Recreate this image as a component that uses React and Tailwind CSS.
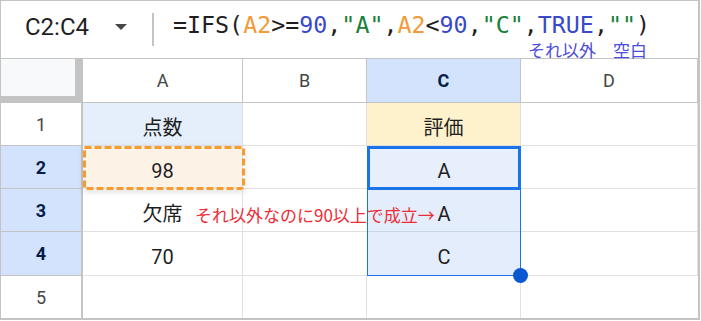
export default function App() {
  const hdr = "flex items-center justify-center border-r border-b border-[#c4c4c4] text-[18px] text-[#444746]";
  const hdrOn = "flex items-center justify-center border-r border-b border-[#c4c4c4] bg-[#d3e3fd] text-[18px] font-bold text-[#041e49]";
  const rowHdr = "flex items-center justify-center border-r-2 border-b border-[#c4c4c4] text-[18px] text-[#444746]";
  const rowHdrOn = "flex items-center justify-center border-r-2 border-b border-[#c4c4c4] bg-[#d3e3fd] text-[18px] font-bold text-[#041e49]";
  const cell = "flex items-center justify-center pt-[7px] border-r border-b border-[#e1e1e1] text-[20px] text-[#1f1f1f]";

  return (
    <div className="w-[701px] h-[321px] bg-white">
      <div className="w-[700px] h-[320px] border-t border-l border-r-2 border-b-2 border-[#c4c4c4] flex flex-col font-['Roboto','Noto_Sans_CJK_JP',sans-serif]">
        {/* formula bar */}
        <div className="h-[58px] shrink-0 border-b border-[#c4c4c4] flex">
          <div className="w-[151px] flex items-center pl-[24px] pb-[6px]">
            <span className="text-[24px] text-[#1f1f1f] leading-none">C2:C4</span>
            <svg className="ml-[26px]" width="12" height="6" viewBox="0 0 12 6">
              <path d="M0 0h12L6 6z" fill="#444746" />
            </svg>
          </div>
          <div className="w-[2px] bg-[#c4c4c4] my-[12px]"></div>
          <div className="flex flex-col pl-[19px] pt-[10px]">
            <div className="font-['DejaVu_Sans_Mono',monospace] text-[23.3px] leading-[27px] whitespace-nowrap text-[#1f1f1f]">
              <span>=IFS(</span>
              <span className="text-[#f29b38]">A2</span>
              <span>&gt;=</span>
              <span className="text-[#3949c8]">90</span>
              <span>,</span>
              <span className="text-[#188038]">"A"</span>
              <span>,</span>
              <span className="text-[#f29b38]">A2</span>
              <span>&lt;</span>
              <span className="text-[#3949c8]">90</span>
              <span>,</span>
              <span className="text-[#188038]">"C"</span>
              <span>,</span>
              <span className="text-[#3949c8]">TRUE</span>
              <span>,</span>
              <span className="text-[#188038]">""</span>
              <span>)</span>
            </div>
            <div className="flex pl-[355px] mt-[3px] text-[17px] leading-[18px] text-[#4b4bdc] font-['Noto_Sans_CJK_JP',sans-serif] whitespace-nowrap">
              <span>それ以外</span>
              <span className="ml-[17px]">空白</span>
            </div>
          </div>
        </div>

        {/* sheet grid */}
        <div className="flex-1 grid grid-cols-[82px_160px_124px_154px_1fr] grid-rows-[44px_43px_43px_43px_44px_1fr]">
          {/* header row */}
          <div className="border-r-[8px] border-b-[7px] border-[#c4c4c4] bg-[#f8f9fa]"></div>
          <div className={hdr}>A</div>
          <div className={hdr}>B</div>
          <div className={hdrOn}>C</div>
          <div className={hdr}>D</div>

          {/* row 1 */}
          <div className={rowHdr}>1</div>
          <div className={cell + " bg-[#e5effc]"}>点数</div>
          <div className={cell}></div>
          <div className={cell + " bg-[#fef2cd]"}>評価</div>
          <div className={cell}></div>

          {/* row 2 */}
          <div className={rowHdrOn}>2</div>
          <div className={cell + " relative bg-[#fdf2e6]"}>
            98
            <svg className="absolute left-0 top-0 shadow-[0_2px_6px_rgba(0,0,0,0.12)]" width="162" height="44">
              <rect x="1.5" y="1.5" width="159" height="41" fill="none" stroke="#f59b2f" strokeWidth="3" strokeDasharray="7 3" />
            </svg>
          </div>
          <div className={cell + " border-r-0"}></div>
          <div className="col-start-4 row-start-3 row-span-3 relative flex flex-col border border-[#1a73e8] text-[20px] text-[#1f1f1f]">
            <div className="h-[42px] relative flex items-center justify-center pt-[6px] bg-[#e7effc]">
              A
              <div className="absolute -inset-px border-[3px] border-[#1a73e8]"></div>
            </div>
            <div className="h-[43px] flex items-center justify-center pt-[7px] bg-[#e3edfb] border-b border-[#c9d5e8]">A</div>
            <div className="flex-1 flex items-center justify-center pt-[7px] bg-[#e3edfb]">C</div>
            <div className="absolute -right-[8px] -bottom-[8px] w-[15px] h-[15px] rounded-full bg-[#0b57d0]"></div>
          </div>
          <div className={cell}></div>

          {/* row 3 */}
          <div className={rowHdrOn}>3</div>
          <div className={cell + " relative"}>
            欠席
            <span className="absolute left-[112px] top-[14px] z-10 whitespace-nowrap text-[17px] leading-[24px] text-[#ec2d37] font-['Noto_Sans_CJK_JP',sans-serif]">
              それ以外なのに90以上で成立→
            </span>
          </div>
          <div className={cell + " border-r-0"}></div>
          <div className={cell}></div>

          {/* row 4 */}
          <div className={rowHdrOn}>4</div>
          <div className={cell}>70</div>
          <div className={cell + " border-r-0"}></div>
          <div className={cell}></div>

          {/* row 5 */}
          <div className={rowHdr + " border-b-0"}>5</div>
          <div className={cell + " border-b-0"}></div>
          <div className={cell + " border-b-0"}></div>
          <div className={cell + " border-b-0"}></div>
          <div className={cell + " border-b-0 border-r-0"}></div>
        </div>
      </div>
    </div>
  );
}
